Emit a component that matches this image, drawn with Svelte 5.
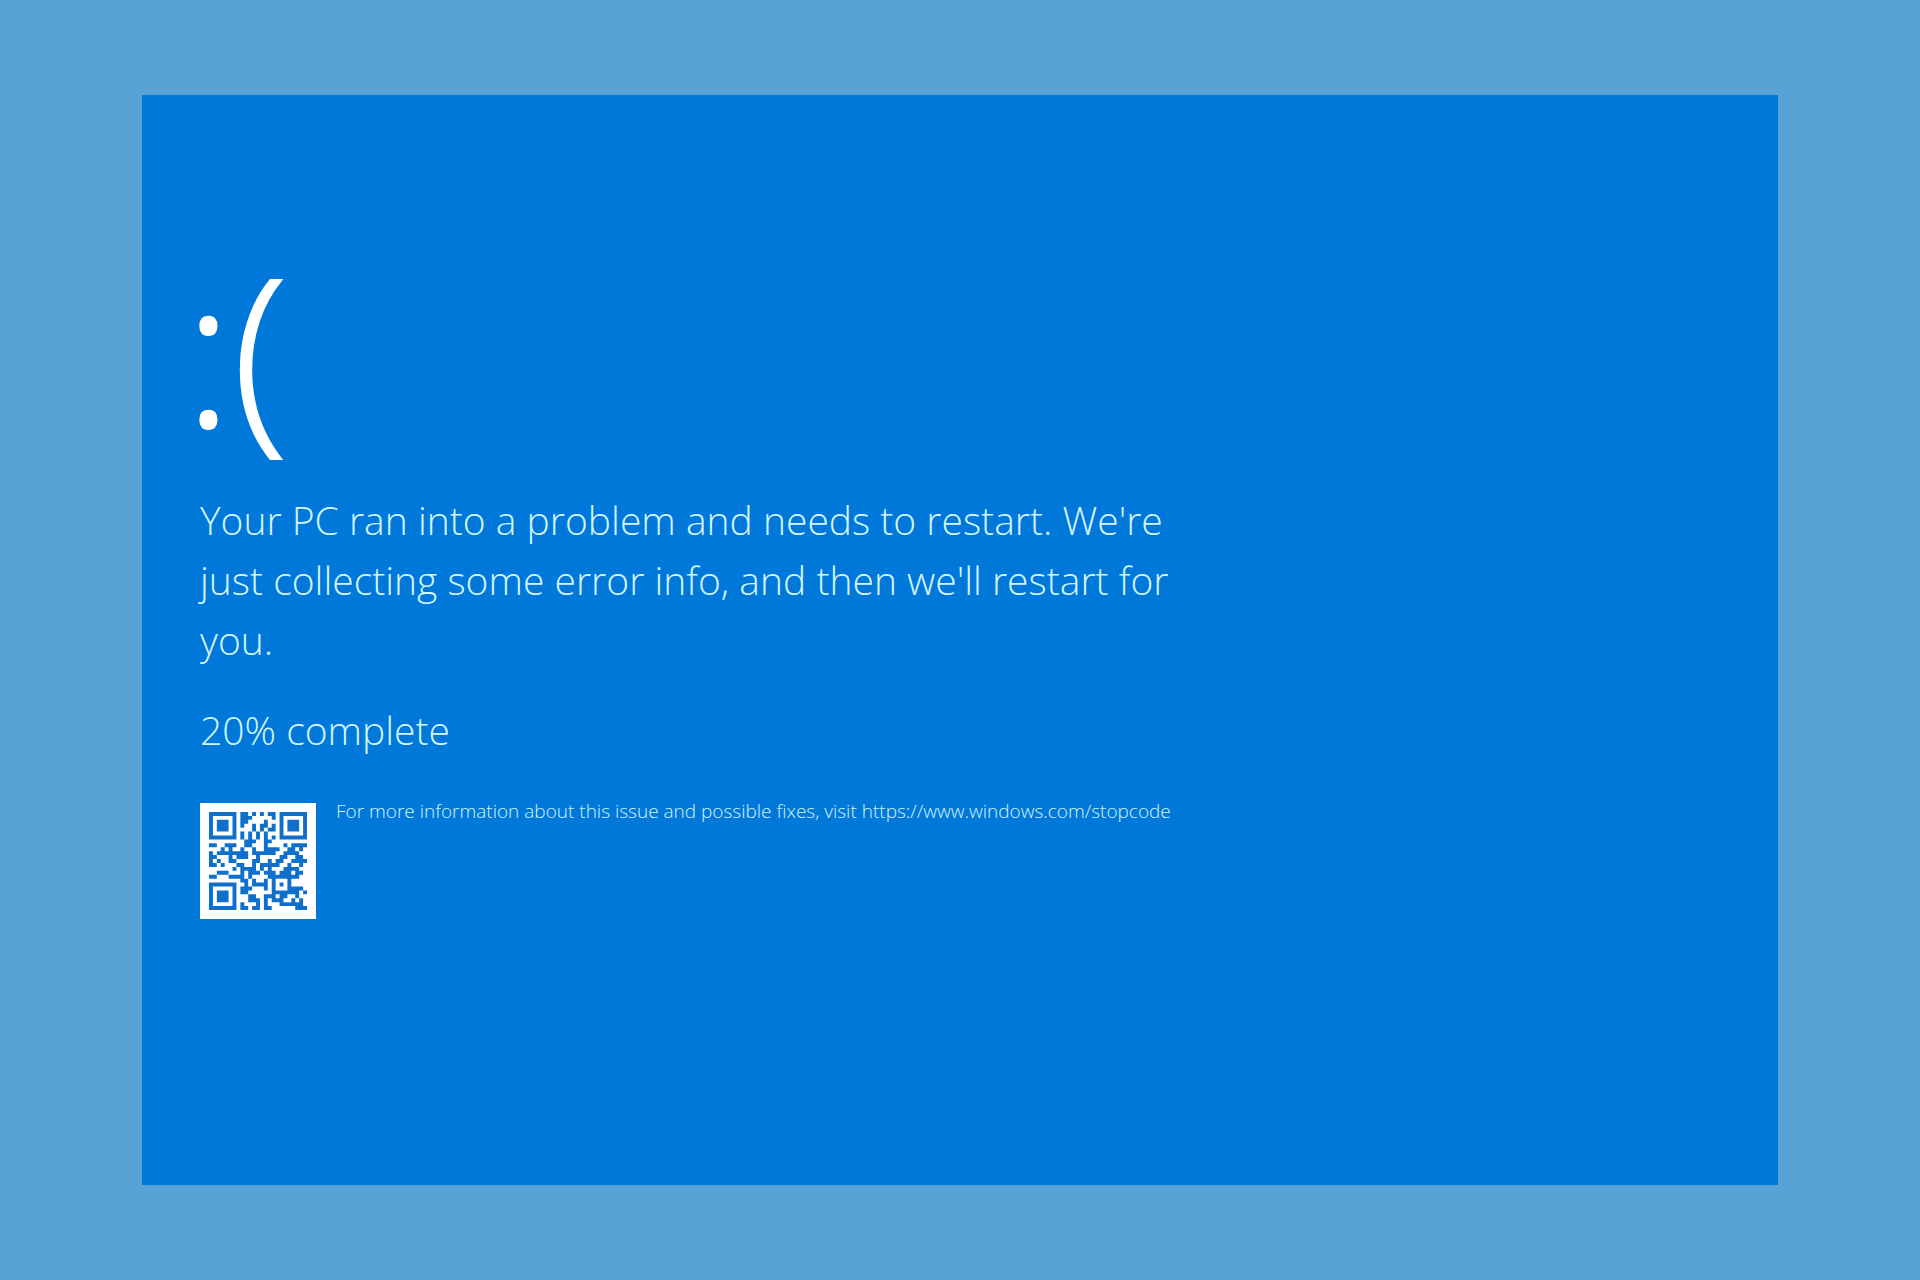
<script>
  const url = 'https://www.windows.com/stopcode'
  const progress = 20

  // QR version 2, level L, mask 4
  const SIZE = 25
  const DATA_LEN = 34
  const EC_LEN = 10
  const FORMAT = '110011000101111'

  function gfMul(a, b) {
    let result = 0
    while (b) {
      if (b & 1) result ^= a
      a <<= 1
      if (a & 256) a ^= 0x11d
      b >>= 1
    }
    return result
  }

  function errorCodewords(data) {
    let gen = [1]
    let root = 1
    for (let i = 0; i < EC_LEN; i++) {
      const next = [...gen, 0]
      gen.forEach((g, j) => (next[j + 1] ^= gfMul(g, root)))
      gen = next
      root = gfMul(root, 2)
    }
    const rest = [...data, ...Array(EC_LEN).fill(0)]
    for (let i = 0; i < data.length; i++) {
      const factor = rest[i]
      gen.forEach((g, j) => (rest[i + j] ^= gfMul(g, factor)))
    }
    return rest.slice(data.length)
  }

  const toBits = (n, len) => n.toString(2).padStart(len, '0')

  function encode(text) {
    const chars = [...text].map((c) => toBits(c.charCodeAt(0), 8)).join('')
    let bits = '0100' + toBits(text.length, 8) + chars + '0000'
    bits = bits.padEnd(Math.ceil(bits.length / 8) * 8, '0')
    const data = bits.match(/.{8}/g).map((b) => parseInt(b, 2))
    for (let i = 0; data.length < DATA_LEN; i++) data.push(i % 2 ? 17 : 236)
    return [...data, ...errorCodewords(data)].map((b) => toBits(b, 8)).join('')
  }

  function buildQr(text) {
    const grid = Array.from({ length: SIZE }, () => Array(SIZE).fill(null))
    const set = (r, c, dark) => {
      if (r >= 0 && c >= 0 && r < SIZE && c < SIZE) grid[r][c] = dark
    }
    const rings = (row, col, radius, light) => {
      for (let r = -radius; r <= radius; r++) {
        for (let c = -radius; c <= radius; c++) {
          set(row + r, col + c, !light.includes(Math.max(Math.abs(r), Math.abs(c))))
        }
      }
    }

    for (let i = 0; i < SIZE; i++) {
      set(6, i, i % 2 === 0)
      set(i, 6, i % 2 === 0)
    }
    rings(3, 3, 4, [2, 4])
    rings(3, SIZE - 4, 4, [2, 4])
    rings(SIZE - 4, 3, 4, [2, 4])
    rings(18, 18, 2, [1])

    const format = [...FORMAT].map((b) => b === '1')
    const corner = [[8, 0], [8, 1], [8, 2], [8, 3], [8, 4], [8, 5], [8, 7], [8, 8], [7, 8], [5, 8], [4, 8], [3, 8], [2, 8], [1, 8], [0, 8]]
    corner.forEach(([r, c], i) => set(r, c, format[i]))
    for (let i = 0; i < 7; i++) set(SIZE - 1 - i, 8, format[i])
    for (let i = 0; i < 8; i++) set(8, SIZE - 8 + i, format[7 + i])
    set(SIZE - 8, 8, true)

    const bits = encode(text)
    let index = 0
    let upward = true
    for (let right = SIZE - 1; right > 0; right -= 2) {
      if (right === 6) right--
      for (let step = 0; step < SIZE; step++) {
        const row = upward ? SIZE - 1 - step : step
        for (const col of [right, right - 1]) {
          if (grid[row][col] !== null) continue
          const masked = (Math.floor(row / 2) + Math.floor(col / 3)) % 2 === 0
          grid[row][col] = (bits[index++] === '1') !== masked
        }
      }
      upward = !upward
    }
    return grid
  }

  const qrPath = buildQr(url)
    .flatMap((row, y) => row.map((dark, x) => (dark ? `M${x} ${y}h1v1h-1z` : '')))
    .join('')
</script>

<div class="page">
  <main class="screen">
    <div class="face">:(</div>
    <h1 class="message">
      Your PC ran into a problem and needs to restart. We're just collecting some error info, and then we'll restart for you.
    </h1>
    <p class="progress">{progress}% complete</p>
    <div class="details">
      <svg class="qr" viewBox="0 0 25 25" role="img" aria-label="QR code">
        <path d={qrPath} />
      </svg>
      <p class="info">
        For more information about this issue and possible fixes, visit <a href={url}>{url}</a>
      </p>
    </div>
  </main>
</div>

<style>
  :global(body) {
    margin: 0;
  }

  .page {
    box-sizing: border-box;
    display: flex;
    min-height: 100vh;
    padding: 95px 142px;
    background: #57a2d5;
  }

  .screen {
    box-sizing: border-box;
    flex: 1;
    padding: 129px 58px;
    background: #0078d9;
    color: #d2f5ff;
    font-family: "Open Sans", "Noto Sans", sans-serif;
    font-weight: 300;
  }

  .face {
    margin: 0 0 18px -16px;
    color: #fff;
    font-size: 204px;
    line-height: 248px;
    -webkit-text-stroke: 2px #fff;
  }

  .message,
  .progress {
    max-width: 1000px;
    margin: 0;
    font-size: 39px;
    font-weight: 300;
    line-height: 60px;
  }

  .progress {
    margin: 30px 0 43px;
  }

  .details {
    display: flex;
    align-items: flex-start;
    gap: 20px;
  }

  .qr {
    flex: none;
    box-sizing: border-box;
    width: 116px;
    height: 116px;
    padding: 9px;
    background: #fff;
    fill: #0f70cc;
  }

  .info {
    margin: 0;
    font-size: 19px;
    line-height: 16px;
  }

  .info a {
    color: inherit;
    text-decoration: none;
  }
</style>
